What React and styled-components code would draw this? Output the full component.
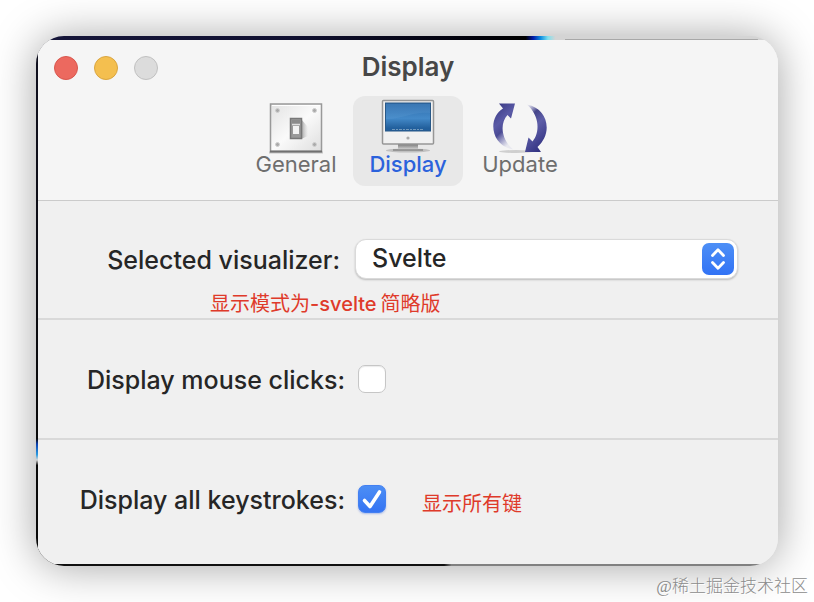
import React, { useState } from "react";
import styled, { createGlobalStyle, css } from "styled-components";

const GlobalStyle = createGlobalStyle`
  * { box-sizing: border-box; }
  body {
    margin: 0;
    background: #fff;
    font-family: Inter, "Noto Sans CJK SC", sans-serif;
    color: #262626;
  }
`;

const Desktop = styled.div`
  min-height: 100vh;
  padding: 36px 36px 0;
  overflow: hidden;
`;

const Backdrop = styled.div`
  padding: 4px 0 2px 2px;
  border-radius: 28px;
  overflow: hidden;
  background:
    linear-gradient(#a8a8a8, #a8a8a8) right 20px top 3px / 26% 1px no-repeat,
    linear-gradient(90deg, #16163a 0, #101030 35%, #000008 60%, #000 66%, #0018a8 67%, #0a8be0 68%, #7fe0ee 69%, #d4d4d4 70%) top / 100% 4px no-repeat,
    linear-gradient(90deg, #101010 55%, #808080 56%) bottom / 100% 2px no-repeat,
    linear-gradient(180deg, #101020 0, #0a0a0a 76%, #0a3fb0 77%, #2a9be0 79%, #d8d8d8 80%, #0a0a0a 81%) left / 50% 100% no-repeat,
    #f0f0f0;
  box-shadow: 0 1px 44px rgba(0, 0, 0, 0.36);
`;

const Window = styled.main`
  background: #f0f0f0;
`;

const Header = styled.header`
  padding-bottom: 14px;
  background: #f5f5f5;
  border-bottom: 1px solid #cbcbcb;
`;

const TitleBar = styled.div`
  display: grid;
  grid-template-columns: 1fr auto 1fr;
  align-items: center;
  height: 56px;
  padding: 0 16px;
`;

const Title = styled.h1`
  margin: 0;
  padding-bottom: 2px;
  font-size: 26px;
  line-height: 54px;
  font-weight: 600;
  color: #474747;
`;

const TrafficLights = styled.div`
  display: flex;
  gap: 16px;
`;

const Light = styled.button`
  width: 24px;
  height: 24px;
  padding: 0;
  border: 1px solid ${(p) => p.$edge};
  border-radius: 50%;
  background: ${(p) => p.$fill};
`;

const Tabs = styled.nav`
  display: flex;
  justify-content: center;
  gap: 2px;
`;

const Tab = styled.button`
  display: flex;
  flex-direction: column;
  align-items: center;
  width: 110px;
  height: 90px;
  padding: 2px 0 0;
  border: 0;
  border-radius: 12px;
  background: transparent;
  font: 400 22px/20px Inter, sans-serif;
  color: #6e6e6e;
  ${(p) =>
    p.$active &&
    css`
      background: #e8e8e8;
      color: #2b62dc;
      font-weight: 500;
    `}
  svg { display: block; flex: none; }
`;

const Section = styled.section`
  display: grid;
  grid-template-columns: ${(p) => p.$label}px minmax(0, 1fr);
  column-gap: ${(p) => p.$gap}px;
  align-items: center;
  min-height: 120px;
  padding-right: 40px;
  & + & { border-top: 2px solid #d9d9d9; }
  &:last-child {
    min-height: 126px;
    padding-bottom: 6px;
  }
`;

const VisualizerSection = styled(Section)`
  align-content: start;
  min-height: 117px;
  padding-top: 38px;
`;

const Label = styled.label`
  justify-self: end;
  padding-top: 2px;
  font-size: 25px;
  font-weight: 450;
  line-height: 38px;
  white-space: nowrap;
`;

const SelectBox = styled.div`
  display: grid;
  grid-template-columns: minmax(0, 1fr) 36px;
  align-items: center;
  svg {
    grid-area: 1 / 2;
    pointer-events: none;
  }
`;

const Select = styled.select`
  grid-area: 1 / 1 / 2 / 3;
  appearance: none;
  width: 100%;
  height: 40px;
  padding: 0 48px 2px 16px;
  border: 1px solid #dadada;
  border-radius: 11px;
  background: #fff;
  box-shadow: 0 1px 2px rgba(0, 0, 0, 0.22);
  font: 450 25px/36px Inter, sans-serif;
  color: #262626;
`;

const Note = styled.span`
  font-size: 20px;
  line-height: 28px;
  color: #df3a2a;
  white-space: nowrap;
`;

const VisualizerNote = styled(Note)`
  grid-column: 1 / -1;
  margin: 11px 0 0 172px;
`;

const Latin = styled.span`
  padding-right: 4px;
  font-weight: 500;
`;

const CheckLine = styled.div`
  display: flex;
  align-items: center;
  gap: 36px;
  ${Note} { padding-top: 10px; }
`;

const CheckBox = styled.span`
  display: grid;
  svg {
    grid-area: 1 / 1;
    pointer-events: none;
  }
`;

const CheckInput = styled.input`
  grid-area: 1 / 1;
  appearance: none;
  width: 28px;
  height: 28px;
  margin: 0;
  border: 1px solid #c6c6c6;
  border-radius: 7px;
  background: #fff;
  box-shadow: inset 0 1px 1px rgba(0, 0, 0, 0.08);
  &:checked {
    border-color: #4380f2;
    background: linear-gradient(#4c8ef5, #3574f3);
    box-shadow: 0 1px 2px rgba(40, 90, 220, 0.35);
  }
`;

const Credit = styled.footer`
  margin-right: -30px;
  padding-top: 8px;
  text-align: right;
  font: 300 17px/26px "Liberation Serif", "Noto Sans CJK SC", serif;
  color: #8c8c8c;
  text-shadow: 1px 1px 0 #fff;
`;

function GeneralIcon() {
  return (
    <svg width="60" height="56" viewBox="0 0 60 56" aria-hidden="true">
      <defs>
        <linearGradient id="plate" x2="1" y2="1">
          <stop stopColor="#e2e2e2" /><stop offset=".5" stopColor="#fafafa" /><stop offset="1" stopColor="#dedede" />
        </linearGradient>
        <linearGradient id="shade" x2="1">
          <stop stopColor="#929292" stopOpacity=".9" /><stop offset="1" stopColor="#bbb" stopOpacity="0" />
        </linearGradient>
      </defs>
      <path d="M3 53.5h54v2H3z" fill="#999" opacity=".5" />
      <rect x="4.5" y="6" width="51" height="47.5" fill="url(#plate)" stroke="#999" strokeWidth="1.5" />
      <path d="M6 7.5h48" stroke="#fff" />
      <path d="M4 53.5h52" stroke="#707070" strokeWidth="2" />
      <g fill="#aaa" stroke="#d0d0d0">
        <circle cx="11.5" cy="12.5" r="2" /><circle cx="48.5" cy="12.5" r="2" />
        <circle cx="11.5" cy="46.5" r="2" /><circle cx="48.5" cy="46.5" r="2" />
      </g>
      <path d="M35 21l7 8v9l-7 3z" fill="url(#shade)" />
      <rect x="24.5" y="20.5" width="11" height="20" fill="#999" stroke="#777" strokeWidth="1.5" />
      <path d="M26 22h8v5h-8z" fill="#8a8a8a" />
      <path d="M27 28h6v8h-6z" fill="#f2f2f2" />
      <path d="M26 26.5h8" stroke="#ddd" strokeWidth="1.5" />
    </svg>
  );
}

function DisplayIcon() {
  return (
    <svg width="60" height="56" viewBox="0 0 60 56" aria-hidden="true">
      <defs>
        <linearGradient id="screen" x2="0" y2="1">
          <stop stopColor="#2e6baa" /><stop offset=".55" stopColor="#4389c8" /><stop offset=".9" stopColor="#225f9c" />
        </linearGradient>
        <linearGradient id="stand" x2="0" y2="1">
          <stop stopColor="#777" /><stop offset="1" stopColor="#ddd" />
        </linearGradient>
      </defs>
      <ellipse cx="30" cy="52.5" rx="22" ry="2" fill="#aaa" opacity=".65" />
      <path d="M20 46h20v6H20z" fill="url(#stand)" />
      <path d="M15 52h30" stroke="#888" strokeWidth="1.5" />
      <rect x="4.5" y="2.5" width="51" height="43.5" rx="1" fill="#f1f1f1" stroke="#969696" strokeWidth="1.5" />
      <rect x="7.5" y="5" width="45" height="28" fill="url(#screen)" stroke="#285887" />
      <path d="M8 6h44v9C35 13 22 22 8 21z" fill="#74aee0" opacity=".16" />
      <path d="M14 31.5h32" stroke="#86a8c6" strokeWidth="1" strokeDasharray="3 1 2 1" opacity=".8" />
      <circle cx="30" cy="40" r="1.6" fill="#aaa" />
    </svg>
  );
}

function UpdateIcon() {
  return (
    <svg width="60" height="56" viewBox="0 0 60 56" aria-hidden="true">
      <defs>
        <linearGradient id="leftArc" x1="0" y1="0" x2=".45" y2="1">
          <stop stopColor="#34347e" /><stop offset=".45" stopColor="#5a5aa6" /><stop offset=".65" stopColor="#4a4a94" /><stop offset="1" stopColor="#7878b8" stopOpacity=".1" />
        </linearGradient>
        <linearGradient id="rightArc" x1=".6" y1="1" x2=".15" y2="0">
          <stop stopColor="#333382" /><stop offset=".5" stopColor="#5e5ea8" /><stop offset=".75" stopColor="#454589" /><stop offset="1" stopColor="#7777b5" stopOpacity=".1" />
        </linearGradient>
      </defs>
      <ellipse cx="26" cy="53.5" rx="17" ry="1.5" fill="#aaa" opacity=".5" />
      <path d="M9 5.5H25L21 20.5L17.5 17C10 25 10.5 40 23 51.5C10 49 3.3 39 3.3 28.5C3.3 21 7 14 13 10.5Z" fill="url(#leftArc)" />
      <path d="M35 54L38.5 39.5L42.5 43.5C50 35 50 18 37 6.5C50 9 56.7 19 56.7 29.5C56.7 37 53 44 47.5 49L51 54Z" fill="url(#rightArc)" />
    </svg>
  );
}

function ArrowsIcon() {
  return (
    <svg width="32" height="32" viewBox="0 0 32 32" aria-hidden="true">
      <defs>
        <linearGradient id="arrows" x2="0" y2="1">
          <stop stopColor="#4d8ff6" /><stop offset="1" stopColor="#3273f5" />
        </linearGradient>
      </defs>
      <rect width="32" height="32" rx="7" fill="url(#arrows)" />
      <path d="M10.5 12.5L16 6.8L21.5 12.5M10.5 19.5L16 25.2L21.5 19.5" fill="none" stroke="#fff" strokeWidth="2.8" strokeLinecap="round" strokeLinejoin="round" />
    </svg>
  );
}

function Toggle({ id, checked, onChange }) {
  return (
    <CheckBox>
      <CheckInput id={id} type="checkbox" checked={checked} onChange={(e) => onChange(e.target.checked)} />
      {checked && (
        <svg width="28" height="28" viewBox="0 0 28 28" aria-hidden="true">
          <path d="M6.5 15.5L12 21.5L21.5 7" fill="none" stroke="#fff" strokeWidth="3.6" strokeLinecap="round" strokeLinejoin="round" />
        </svg>
      )}
    </CheckBox>
  );
}

const tabs = [
  { name: "General", Icon: GeneralIcon },
  { name: "Display", Icon: DisplayIcon },
  { name: "Update", Icon: UpdateIcon },
];

export default function App() {
  const [active, setActive] = useState("Display");
  const [clicks, setClicks] = useState(false);
  const [keys, setKeys] = useState(true);
  return (
    <>
      <GlobalStyle />
      <Desktop>
        <Backdrop>
          <Window>
            <Header>
              <TitleBar>
                <TrafficLights>
                  <Light aria-label="Close" $fill="#ec695f" $edge="#d8574e" />
                  <Light aria-label="Minimize" $fill="#f4bf4f" $edge="#d9a540" />
                  <Light aria-label="Zoom" $fill="#dcdcdc" $edge="#c0c0c0" />
                </TrafficLights>
                <Title>Display</Title>
              </TitleBar>
              <Tabs>
                {tabs.map(({ name, Icon }) => (
                  <Tab key={name} $active={name === active} onClick={() => setActive(name)}>
                    <Icon />
                    {name}
                  </Tab>
                ))}
              </Tabs>
            </Header>
            <VisualizerSection $label={302} $gap={15}>
              <Label htmlFor="visualizer">Selected visualizer:</Label>
              <SelectBox>
                <Select id="visualizer" defaultValue="Svelte">
                  <option>Svelte</option>
                </Select>
                <ArrowsIcon />
              </SelectBox>
              <VisualizerNote>
                显示模式为<Latin>-svelte</Latin>简略版
              </VisualizerNote>
            </VisualizerSection>
            <Section $label={307} $gap={13}>
              <Label htmlFor="clicks">Display mouse clicks:</Label>
              <CheckLine>
                <Toggle id="clicks" checked={clicks} onChange={setClicks} />
              </CheckLine>
            </Section>
            <Section $label={307} $gap={13}>
              <Label htmlFor="keys">Display all keystrokes:</Label>
              <CheckLine>
                <Toggle id="keys" checked={keys} onChange={setKeys} />
                <Note>显示所有键</Note>
              </CheckLine>
            </Section>
          </Window>
        </Backdrop>
        <Credit>@稀土掘金技术社区</Credit>
      </Desktop>
    </>
  );
}
